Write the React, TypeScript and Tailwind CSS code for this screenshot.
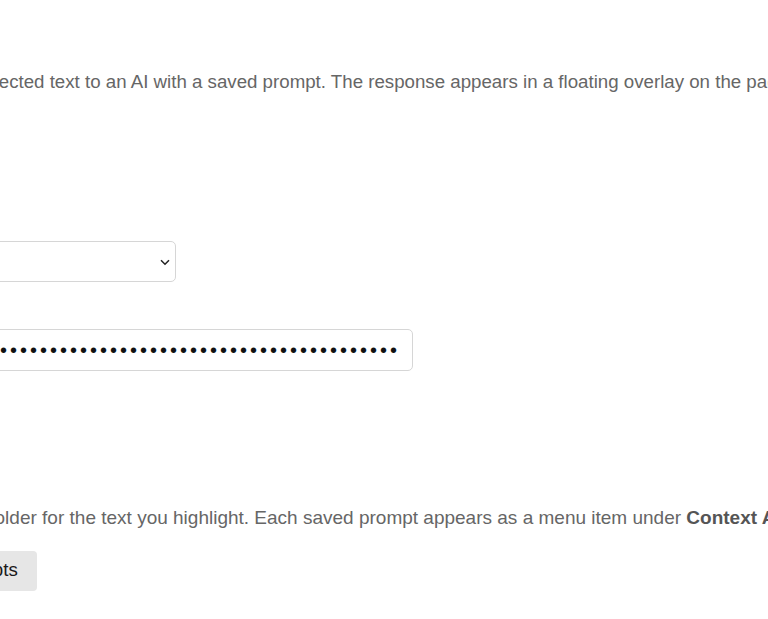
import React from "react";

const font = { fontFamily: '"Liberation Sans", Arial, sans-serif' };

export default function App() {
  return (
    <div className="h-[619px] w-[768px] overflow-hidden bg-white" style={font}>
      <div className="ml-[-183px] flex w-[1400px] flex-col pt-[68px]">
        {/* ─── Context AI intro ─── */}
        <p className="whitespace-nowrap text-[18.7px] leading-[27px] text-[#666666]">
          Right-click to send selected text to an AI with a saved prompt. The
          response appears in a floating overlay on the page.
        </p>

        {/* Provider */}
        <label className="mt-[117px] text-[15px] font-semibold text-[#333]">
          Provider
        </label>
        <div className="relative mt-[6px] w-[359px]">
          <select
            defaultValue="openai"
            className="h-[41px] w-full appearance-none rounded-[5px] border border-[#d6d6d6] bg-white px-3 text-[16px] text-[#222]"
          >
            <option value="openai">OpenAI</option>
            <option value="anthropic">Anthropic</option>
          </select>
          <svg
            className="pointer-events-none absolute right-[6px] top-[18px]"
            width="10"
            height="7"
            viewBox="0 0 10 7"
            fill="none"
          >
            <path d="M1 1.2 5 5.2 9 1.2" stroke="#222" strokeWidth="1.5" />
          </svg>
        </div>

        {/* API key */}
        <label className="mt-[19px] text-[15px] font-semibold text-[#333]">
          API key
        </label>
        <input
          type="password"
          readOnly
          value={"x".repeat(71)}
          className="mt-[6px] h-[42px] w-[596px] rounded-[5px] border border-[#d6d6d6] bg-white px-3 text-[20px] tracking-[3px] text-[#111]"
        />

        {/* Prompts */}
        <h3 className="mt-[90px] text-[15px] font-semibold text-[#333]">Prompts</h3>
        <p className="ml-[-20px] mt-[20px] whitespace-nowrap text-[19px] leading-[27px] text-[#666666]">
          Use {"{{text}}"} as a placeholder for the text you highlight. Each saved
          prompt appears as a menu item under{" "}
          <strong className="font-bold text-[#555]">Context AI</strong> in the
          right-click menu.
        </p>
        <div className="mt-[20px]">
          <button className="h-[40px] rounded-[4px] bg-[#e6e6e6] px-[19px] text-[18.7px] text-[#1a1a1a]">
            Manage your prompts
          </button>
        </div>
      </div>
    </div>
  );
}
